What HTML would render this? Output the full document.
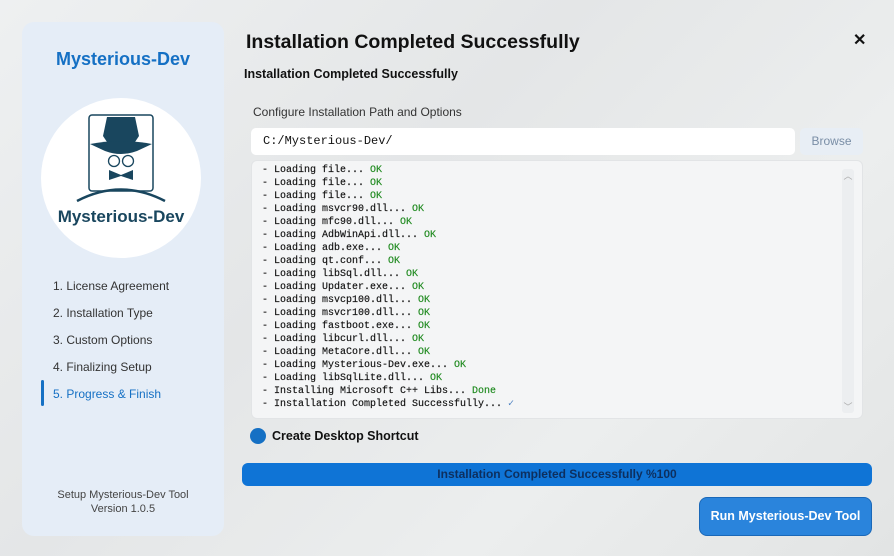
<!DOCTYPE html>
<html><head><meta charset="utf-8"><style>
*{margin:0;padding:0;box-sizing:border-box}
body{width:894px;height:556px;overflow:hidden;font-family:"Liberation Sans",sans-serif;background:linear-gradient(135deg,#eef0f1 0%,#e4e6e7 40%,#eceeee 70%,#e2e4e4 100%);position:relative}
.side{position:absolute;left:22px;top:22px;width:202px;height:514px;background:#e5edf7;border-radius:12px}
.brand{position:absolute;left:0;width:202px;top:27px;text-align:center;color:#1570c4;font-weight:bold;font-size:18px}
.circle{position:absolute;left:19px;top:76px;width:160px;height:160px;border-radius:50%;background:#fff}
.steps{position:absolute;left:31px;top:257px;font-size:12px;color:#333}
.steps div{height:27px}
.steps .act{color:#1570c4}
.bar{position:absolute;left:19px;top:358px;width:3px;height:26px;background:#1570c4;border-radius:2px}
.foot{position:absolute;left:0;width:202px;top:466px;text-align:center;font-size:11px;color:#444;line-height:14px}
.abs{position:absolute}
h1{position:absolute;left:246px;top:31px;font-size:19.5px;font-weight:bold;color:#111}
.close{position:absolute;left:853px;top:30px;font-size:16px;font-weight:bold;color:#111}
.sub{left:244px;top:67px;font-size:12.5px;font-weight:bold;color:#111}
.lab{left:253px;top:105px;font-size:12px;color:#333}
.path{left:251px;top:128px;width:544px;height:27px;background:#fff;border-radius:5px;font-family:"Liberation Mono",monospace;font-size:12px;color:#111;padding:6px 12px}
.browse{left:800px;top:128px;width:63px;height:27px;background:#e8eef5;border-radius:5px;color:#7a8ea6;font-size:12px;text-align:center;line-height:27px}
.log{left:251px;top:160px;width:612px;height:259px;background:#f4f5f6;border:1px solid #e2e4e6;border-radius:6px;overflow:hidden}
.lines{position:absolute;left:10px;font-family:"Liberation Mono",monospace;font-size:10px;line-height:13px;color:#111;white-space:pre;-webkit-text-stroke:0.15px #111}
.ok{color:#1f8a1f;-webkit-text-stroke:0.15px #1f8a1f}
.ck{color:#4a7fc0;-webkit-text-stroke:0}
.sb{position:absolute;right:8px;top:8px;width:12px;height:244px;background:#eceef0;border-radius:3px;color:#aaa;font-size:9px;text-align:center}
.radio{left:250px;top:428px;width:16px;height:16px;border-radius:50%;background:#1570c4}
.rl{left:272px;top:429px;font-size:12.5px;font-weight:bold;color:#111}
.prog{left:242px;top:463px;width:630px;height:23px;background:#0f74d6;border-radius:6px;text-align:center;line-height:23px;font-size:12px;font-weight:bold;color:#0d2f5e}
.run{left:699px;top:497px;width:173px;height:39px;background:#2a84dc;border:1px solid #1a68b8;border-radius:8px;color:#fff;font-size:12.5px;font-weight:bold;text-align:center;line-height:37px}
</style></head><body>
<div class="side">
<div class="brand">Mysterious-Dev</div>
<div class="circle">
<svg width="160" height="160" viewBox="0 0 160 160">
<rect x="48" y="17" width="64" height="76" rx="3" fill="none" stroke="#19465e" stroke-width="1.5"/>
<path d="M66 19 L94 19 L98 38 L94 44 L66 44 L62 38Z" fill="#19465e"/>
<path d="M49 46 Q80 40 111 46 L96 53 Q80 59 64 53Z" fill="#19465e"/>
<circle cx="73" cy="63" r="5.5" fill="none" stroke="#19465e" stroke-width="1.3"/>
<circle cx="87" cy="63" r="5.5" fill="none" stroke="#19465e" stroke-width="1.3"/>
<path d="M68 72 L80 77 L92 72 L92 82 L80 78 L68 82Z" fill="#19465e"/>
<path d="M36 103 Q80 80 124 103" fill="none" stroke="#19465e" stroke-width="2.5"/>
<text x="80" y="124" text-anchor="middle" font-family="Liberation Sans" font-weight="bold" font-size="17" fill="#19465e">Mysterious-Dev</text>
</svg>
</div>
<div class="steps"><div>1. License Agreement</div><div>2. Installation Type</div><div>3. Custom Options</div><div>4. Finalizing Setup</div><div class="act">5. Progress &amp; Finish</div></div>
<div class="bar"></div>
<div class="foot">Setup Mysterious-Dev Tool<br>Version 1.0.5</div>
</div>
<h1>Installation Completed Successfully</h1>
<div class="close">✕</div>
<div class="abs sub">Installation Completed Successfully</div>
<div class="abs lab">Configure Installation Path and Options</div>
<div class="abs path">C:/Mysterious-Dev/</div>
<div class="abs browse">Browse</div>
<div class="abs log"><div class="lines" style="top:3px">- Loading file... <span class="ok">OK</span>
- Loading file... <span class="ok">OK</span>
- Loading file... <span class="ok">OK</span>
- Loading msvcr90.dll... <span class="ok">OK</span>
- Loading mfc90.dll... <span class="ok">OK</span>
- Loading AdbWinApi.dll... <span class="ok">OK</span>
- Loading adb.exe... <span class="ok">OK</span>
- Loading qt.conf... <span class="ok">OK</span>
- Loading libSql.dll... <span class="ok">OK</span>
- Loading Updater.exe... <span class="ok">OK</span>
- Loading msvcp100.dll... <span class="ok">OK</span>
- Loading msvcr100.dll... <span class="ok">OK</span>
- Loading fastboot.exe... <span class="ok">OK</span>
- Loading libcurl.dll... <span class="ok">OK</span>
- Loading MetaCore.dll... <span class="ok">OK</span>
- Loading Mysterious-Dev.exe... <span class="ok">OK</span>
- Loading libSqlLite.dll... <span class="ok">OK</span>
- Installing Microsoft C++ Libs... <span class="ok">Done</span>
- Installation Completed Successfully... <span class="ck">✓</span></div>
<div class="sb"><div>︿</div><div style="position:absolute;bottom:0;width:12px">﹀</div></div></div>
<div class="abs radio"></div>
<div class="abs rl">Create Desktop Shortcut</div>
<div class="abs prog">Installation Completed Successfully %100</div>
<div class="abs run">Run Mysterious-Dev Tool</div>
</body></html>
